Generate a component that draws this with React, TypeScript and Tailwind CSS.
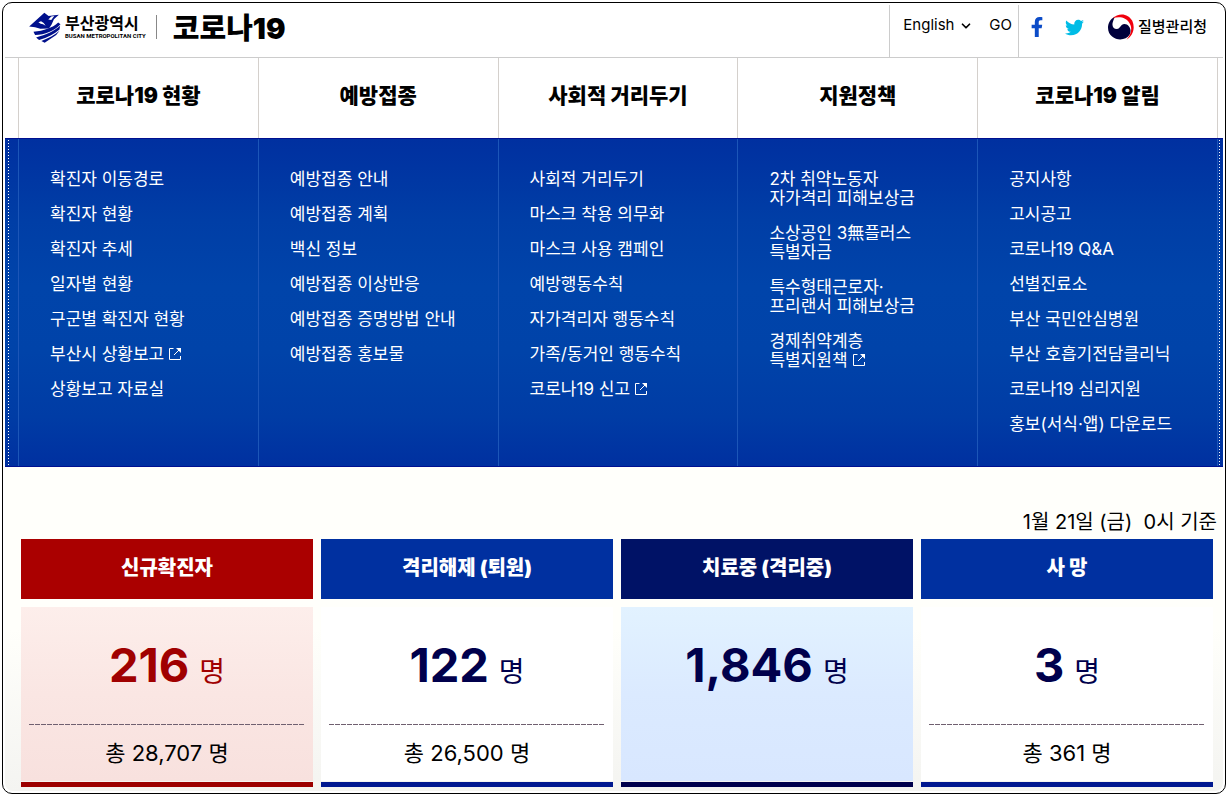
import { ChevronDown } from "lucide-react";
import { FaFacebookF, FaTwitter } from "react-icons/fa";

type MenuItem = { lines: string[]; external?: boolean };
type MenuColumn = { title: string; items: MenuItem[] };

const menu: MenuColumn[] = [
  {
    title: "코로나19 현황",
    items: [
      { lines: ["확진자 이동경로"] },
      { lines: ["확진자 현황"] },
      { lines: ["확진자 추세"] },
      { lines: ["일자별 현황"] },
      { lines: ["구군별 확진자 현황"] },
      { lines: ["부산시 상황보고"], external: true },
      { lines: ["상황보고 자료실"] },
    ],
  },
  {
    title: "예방접종",
    items: [
      { lines: ["예방접종 안내"] },
      { lines: ["예방접종 계획"] },
      { lines: ["백신 정보"] },
      { lines: ["예방접종 이상반응"] },
      { lines: ["예방접종 증명방법 안내"] },
      { lines: ["예방접종 홍보물"] },
    ],
  },
  {
    title: "사회적 거리두기",
    items: [
      { lines: ["사회적 거리두기"] },
      { lines: ["마스크 착용 의무화"] },
      { lines: ["마스크 사용 캠페인"] },
      { lines: ["예방행동수칙"] },
      { lines: ["자가격리자 행동수칙"] },
      { lines: ["가족/동거인 행동수칙"] },
      { lines: ["코로나19 신고"], external: true },
    ],
  },
  {
    title: "지원정책",
    items: [
      { lines: ["2차 취약노동자", "자가격리 피해보상금"] },
      { lines: ["소상공인 3無플러스", "특별자금"] },
      { lines: ["특수형태근로자·", "프리랜서 피해보상금"] },
      { lines: ["경제취약계층", "특별지원책"], external: true },
    ],
  },
  {
    title: "코로나19 알림",
    items: [
      { lines: ["공지사항"] },
      { lines: ["고시공고"] },
      { lines: ["코로나19 Q&A"] },
      { lines: ["선별진료소"] },
      { lines: ["부산 국민안심병원"] },
      { lines: ["부산 호흡기전담클리닉"] },
      { lines: ["코로나19 심리지원"] },
      { lines: ["홍보(서식·앱) 다운로드"] },
    ],
  },
];

const stats = [
  {
    label: "신규확진자",
    value: "216",
    total: "28,707",
    head: "bg-[#aa0000]",
    body: "bg-linear-to-b from-[#fdeeeb] via-[#fae6e3] to-[#f8e1de]",
    text: "text-[#a00000]",
    bar: "bg-[#9c0000]",
  },
  {
    label: "격리해제 (퇴원)",
    value: "122",
    total: "26,500",
    head: "bg-[#0030a0]",
    body: "bg-white",
    text: "text-[#00004c]",
    bar: "bg-[#001890]",
  },
  {
    label: "치료중 (격리중)",
    value: "1,846",
    total: null,
    head: "bg-[#001266]",
    body: "bg-linear-to-b from-[#e2f2ff] via-[#dbeaff] to-[#d8e7ff]",
    text: "text-[#00004c]",
    bar: "bg-[#00004c]",
  },
  {
    label: "사 망",
    value: "3",
    total: "361",
    head: "bg-[#0030a0]",
    body: "bg-white",
    text: "text-[#00004c]",
    bar: "bg-[#001890]",
  },
];

function BusanMark() {
  return (
    <svg viewBox="90 34 96 94" className="h-[31px] w-8" aria-hidden="true">
      <path
        d="M90 78 L136 36 L149 46 L180 42 L165 56 L158 72 L150 84 L124 85 L108 80 Z"
        fill="#00108c"
      />
      <path
        d="M118 65 L126 62 L134 67 L140 76 L132 71 L125 70 Z M148 57 L157 48 L166 46 L157 58 Z"
        fill="#fff"
      />
      <path d="M103 94 C135 91 160 83 178 66 L185 71 C166 92 138 102 108 104 Z" fill="#00108c" />
      <path d="M111 111 C142 103 164 93 184 76 L182 87 C166 101 146 111 120 119 Z" fill="#00108c" />
      <path d="M127 122 C148 114 168 104 182 91 L172 104 L137 127 Z" fill="#00108c" />
    </svg>
  );
}

function GovMark() {
  return (
    <svg viewBox="0 0 76 76" className="size-[26px]" aria-hidden="true">
      <path
        d="M20 8 C-4 20 -6 52 12 66 C28 80 54 76 63 61 C71 47 62 29 48 29 C37 29 36 43 26 44 C15 44 11 34 14 24 C16 17 19 12 20 8 Z"
        fill="#00003c"
      />
      <path
        d="M13 13 C32 -6 60 -1 71 20 C80 40 74 62 54 75 C68 60 72 42 63 27 C53 9 32 6 13 13 Z"
        fill="#f0000c"
      />
    </svg>
  );
}

function ExternalIcon() {
  return (
    <svg
      viewBox="0 0 12 12"
      className="ml-[5px] inline-block size-3 align-baseline"
      fill="none"
      stroke="currentColor"
      role="img"
      aria-label="새창"
    >
      <path d="M4.5 .5 H.5 V11.5 H11.5 V8" />
      <path d="M5 7 L11 1" />
      <path d="M7 0 H12 V5 Z" fill="currentColor" stroke="none" />
    </svg>
  );
}

function Header() {
  return (
    <header className="flex h-[53px] items-stretch border-b border-[#ccc]">
      <div className="flex flex-1 items-center pb-2 pl-6">
        <a href="#busan" className="flex items-center gap-1">
          <BusanMark />
          <span className="flex flex-col">
            <span className="text-[16px] leading-[18px] font-bold">부산광역시</span>
            <span className="font-['Liberation_Sans_Narrow','Roboto',sans-serif] text-[6px] leading-[8px] font-bold">
              BUSAN METROPOLITAN CITY
            </span>
          </span>
        </a>
        <span className="ml-[10px] h-6 w-px bg-[#888]" />
        <a href="#home" className="ml-4 pt-1 text-[29px] leading-[40px] font-black">
          코로나19
        </a>
      </div>

      <form
        className="flex items-center border-x border-[#ccc] pr-[6px] pb-3 pl-[13px] text-[15px]"
        onSubmit={(e) => e.preventDefault()}
      >
        <div className="relative">
          <select
            aria-label="Language"
            className="h-7 w-[74px] appearance-none bg-transparent"
          >
            <option>English</option>
          </select>
          <ChevronDown
            size={14}
            strokeWidth={3}
            className="pointer-events-none absolute top-2 right-1"
          />
        </div>
        <button type="submit" className="ml-3 leading-5">
          GO
        </button>
      </form>

      <div className="flex items-center pr-4 pb-2 pl-2">
        <a href="#facebook" aria-label="Facebook" className="text-[#0c4cc8]">
          <FaFacebookF size={20} />
        </a>
        <a href="#twitter" aria-label="Twitter" className="ml-[18px] text-[#00bce6]">
          <FaTwitter size={19} />
        </a>
        <a href="#kdca" className="ml-6 flex items-center gap-1 text-[15px] leading-5 font-medium">
          <GovMark />
          질병관리청
        </a>
      </div>
    </header>
  );
}

function Navigation() {
  return (
    <nav>
      <div className="mr-[5px] ml-[13px] grid grid-cols-5 border-l border-[#d4d0cc]">
        {menu.map((column) => (
          <h2
            key={column.title}
            className="flex h-20 items-center justify-center border-r border-[#d4d0cc] pb-[5px] text-[21px] font-black"
          >
            {column.title}
          </h2>
        ))}
      </div>

      <div className="flex border-y border-[#001090] bg-[linear-gradient(to_bottom,#0030a0,#003ea6_25%,#0044aa_45%,#0043a9_65%,#003ca5_85%,#0030a0)]">
        <span className="my-px ml-[3px] w-px bg-[repeating-linear-gradient(to_bottom,#fff_0_1px,transparent_1px_3px)]" />
        <div className="ml-[9px] grid flex-1 grid-cols-5 border-l border-[#1c56b8]">
          {menu.map((column) => (
            <ul
              key={column.title}
              className="flex min-h-[327px] flex-col gap-4 border-r border-[#1c56b8] pt-[31px] pb-8 pl-[31px] text-[17px] leading-[19px] text-white"
            >
              {column.items.map((item) => (
                <li key={item.lines[0]}>
                  <a href="#menu">
                    {item.lines.map((line, i) => (
                      <span key={line} className="block whitespace-nowrap">
                        {line}
                        {item.external && i === item.lines.length - 1 && <ExternalIcon />}
                      </span>
                    ))}
                  </a>
                </li>
              ))}
            </ul>
          ))}
        </div>
        <span className="my-px mr-[3px] ml-px w-px bg-[repeating-linear-gradient(to_bottom,#fff_0_1px,transparent_1px_3px)]" />
      </div>
    </nav>
  );
}

function Status() {
  return (
    <section className="rounded-b-[8px] bg-linear-to-b from-[#fffffb] from-50% to-[#f4f4f1] pb-1">
      <p className="pt-[41px] pr-[6px] text-right text-[20px] leading-[28px] whitespace-pre">
        {"1월 21일 (금)  0시 기준"}
      </p>
      <div className="mt-[3px] mr-[10px] ml-4 grid grid-cols-4 gap-2">
        {stats.map((stat) => (
          <article key={stat.label} className="flex flex-col">
            <h3
              className={`flex h-[60px] items-center justify-center pb-[3px] text-[20px] font-black text-white ${stat.head}`}
            >
              {stat.label}
            </h3>
            <div className={`mt-2 h-[174px] px-2 text-center ${stat.body}`}>
              <p
                className={`flex h-[117px] items-baseline justify-center gap-[10px] pt-[28px] leading-[60px] ${stat.text}`}
              >
                <strong className="text-[47px] font-bold">{stat.value}</strong>
                <span className="text-[28px]">명</span>
              </p>
              {stat.total && (
                <>
                  <div className="h-px bg-[repeating-linear-gradient(to_right,#706070_0_5px,transparent_5px_6px)]" />
                  <p className="mt-[13px] text-[22px] leading-[30px]">총 {stat.total} 명</p>
                </>
              )}
            </div>
            <div className={`mt-px h-[5px] ${stat.bar}`} />
          </article>
        ))}
      </div>
    </section>
  );
}

export default function App() {
  return (
    <div className="bg-white p-[2px] font-['Inter','Noto_Sans_CJK_KR',sans-serif] text-black">
      <main className="rounded-[10px] border border-black p-[2px]">
        <Header />
        <Navigation />
        <Status />
      </main>
    </div>
  );
}
